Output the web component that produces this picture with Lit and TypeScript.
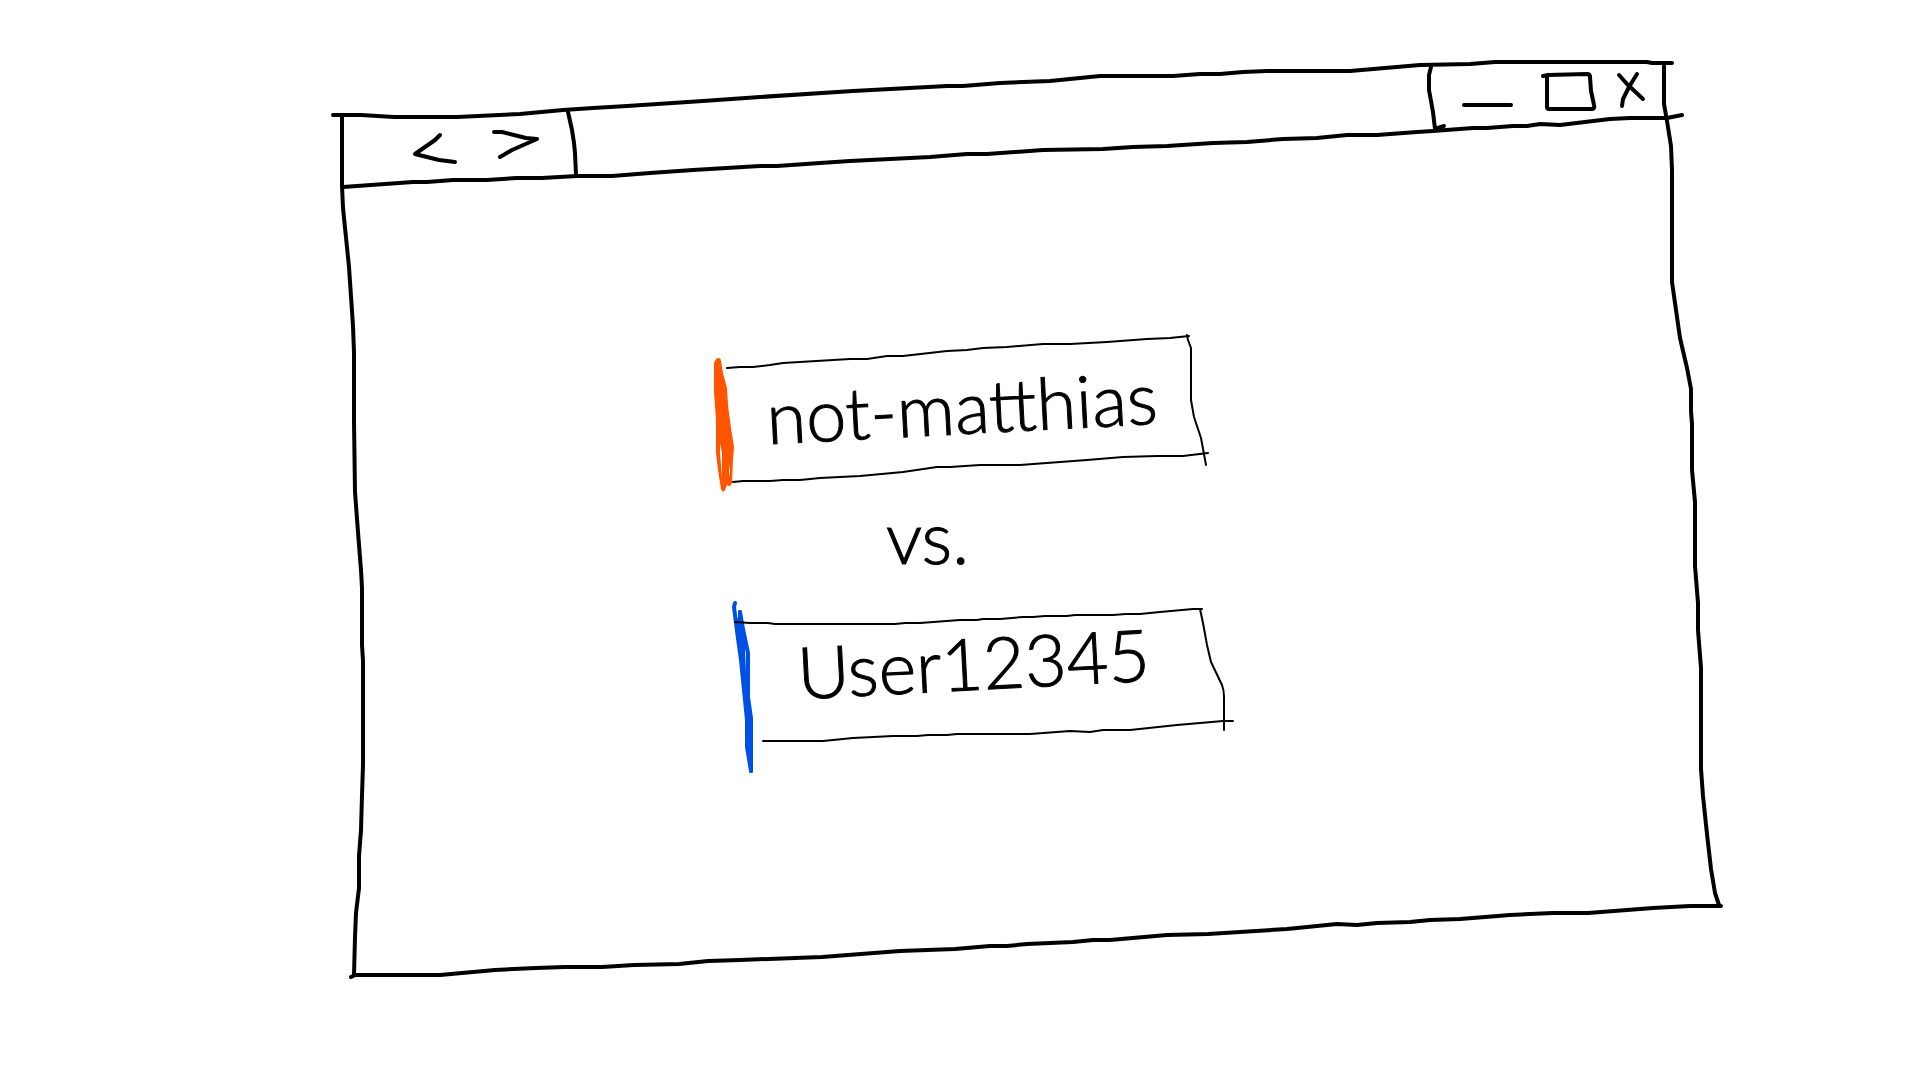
import { LitElement, html, css, svg } from "lit";
import { customElement, property } from "lit/decorators.js";

/** Hand-drawn outline of the browser window with its title bar. */
const windowFrame = html`
  <svg class="sketch" viewBox="333 60 1391 920" preserveAspectRatio="none" aria-hidden="true">
    <g class="thick">
      <path d="M333 115H361L394 117H457L520 114L563 110L593 108L627 106L703 101L760 97L853 91L947 86H963L1000 83L1050 81L1100 76H1173L1200 74H1220L1243 72L1267 71H1350L1420 65L1470 64L1495 62H1647L1652 63H1672" />
      <path d="M343 187L357 186L413 182H427L453 180L487 180L517 178H542L577 176H612L650 173L693 170L760 166H777L820 163L850 161L870 160L930 157L967 154H987L1043 150L1103 149L1133 147L1167 146L1213 143L1247 142L1283 139L1317 138L1347 135L1377 135L1417 132L1433 131L1473 128H1487L1513 126H1527L1540 124L1560 125L1610 119L1630 118H1667L1682 115" />
      <path d="M342 115V186L343 208L349 267L353 326L354 353V422L355 492L358 532L361 570L362 588V645L363 661V765L362 795L361 830L359 856V888L356 913L355 937L354 975" />
      <path d="M351 977L355 975H440L495 970L536 968L565 967H602L634 965L679 964L708 961L740 960L822 957L900 951L955 949L990 946H1007L1027 944L1073 942L1093 940H1110L1167 935L1208 934L1287 929L1337 924L1357 925L1377 923L1410 922L1430 920L1460 919L1510 915L1553 913H1588L1653 908L1690 906H1721" />
      <path d="M1664 66V104L1667 121L1671 146L1672 170V282L1675 303L1680 338L1687 368L1691 389V411L1692 424V470L1695 502V566L1698 603V630L1701 668V769L1703 796L1707 834L1711 869L1715 893L1719 905" />
      <path d="M568 112L572 130L574 143L575 153L576 175" />
      <path d="M1431 67L1429 75V90L1433 112L1435 129L1444 126" />
    </g>
  </svg>
`;

const orangeCard = svg`
  <svg class="sketch" viewBox="714 334 496 158" preserveAspectRatio="none" aria-hidden="true">
    <path class="orange" fill-rule="evenodd" d="M715 361Q716 358 718 358Q721 358 721 361L723 373L727 388L728 405L731 428L734 447L733 460L732 483Q730 488 727 485L725 490Q723 494 721 489L718 470L716 453V420L714 392V363ZM720 443L722 453V477L720 453ZM729 464L730 472L729 477Z" />
    <path class="thin" d="M727 368L740 367H753L770 365L783 363L850 359H867L887 356H903L947 351L967 350L983 348L1007 347L1043 344H1070L1107 342L1147 339L1170 338L1189 336" />
    <path class="thin" d="M1187 335L1188 340L1191 348V400L1194 417L1201 438L1206 465" />
    <path class="thin" d="M1208 453L1183 456H1157L1123 457L1087 460L1020 465H980L950 467H937L903 472L860 476L820 478L800 480H783L770 481H743L733 482" />
  </svg>
`;

const blueCard = svg`
  <svg class="sketch" viewBox="732 602 502 172" preserveAspectRatio="none" aria-hidden="true">
    <g class="blue">
      <path d="M735 603L734 607L737 631L741 660L745 700L747 720V747L751 771" />
      <path d="M740 612L743 629L748 653V697L751 718V771" />
      <path d="M740 612V630L743 660L745 690L748 720L750 760" />
      <path d="M738 620L743 645L744 680L748 710V745" />
    </g>
    <path class="thin" d="M735 622L750 623H768L775 624H895L905 623H920L960 620H977L983 619H1000L1023 617H1033L1045 616H1067L1075 615H1113L1126 614H1140L1160 612L1193 609H1202" />
    <path class="thin" d="M1200 609L1203 623L1207 645L1211 662L1222 685Q1224 690 1224 697V730" />
    <path class="thin" d="M1233 721H1223L1177 725L1130 730H1103L1090 732L1070 731L1030 734H957L947 735H928L917 736H893L853 738L823 741H763" />
  </svg>
`;

@customElement("player-card")
export class PlayerCard extends LitElement {
  @property() name = "";
  @property({ reflect: true }) side: "orange" | "blue" = "orange";

  static styles = css`
    :host {
      display: grid;
      justify-items: center;
      align-items: start;
      position: relative;
      box-sizing: border-box;
    }
    :host([side="orange"]) {
      width: 496px;
      min-height: 158px;
      padding-top: 28px;
    }
    :host([side="blue"]) {
      width: 502px;
      min-height: 172px;
      padding: 16px 20px 0 0;
    }
    .sketch {
      position: absolute;
      inset: 0;
      width: 100%;
      height: 100%;
      overflow: visible;
    }
    .thin {
      fill: none;
      stroke: #000;
      stroke-width: 2;
      stroke-linecap: round;
      stroke-linejoin: round;
    }
    .orange {
      fill: #ff5500;
    }
    .blue {
      fill: none;
      stroke: #0050e6;
      stroke-width: 4;
      stroke-linecap: round;
      stroke-linejoin: round;
    }
    .name {
      margin: 0;
      font-size: 72px;
      line-height: 88px;
      font-weight: 300;
      -webkit-text-stroke: 1px #000;
      white-space: nowrap;
      transform: rotate(-3deg);
    }
  `;

  render() {
    return html`
      ${this.side === "orange" ? orangeCard : blueCard}
      <h2 class="name">${this.name}</h2>
    `;
  }
}

@customElement("app-root")
export class AppRoot extends LitElement {
  static styles = css`
    :host {
      display: flex;
      box-sizing: border-box;
      min-height: 100vh;
      padding: 60px 196px 100px 333px;
      background: #fff;
      color: #000;
      font-family: Lato, "Open Sans", sans-serif;
    }
    .window {
      position: relative;
      flex: 1;
      display: flex;
      flex-direction: column;
    }
    .sketch {
      position: absolute;
      inset: 0;
      width: 100%;
      height: 100%;
      overflow: visible;
      pointer-events: none;
    }
    .thick,
    .icon {
      fill: none;
      stroke: #000;
      stroke-width: 4;
      stroke-linecap: round;
      stroke-linejoin: round;
    }
    .titlebar {
      display: flex;
      justify-content: space-between;
      padding: 12px 80px 20px;
    }
    .history,
    .controls {
      display: flex;
    }
    .history {
      gap: 32px;
      align-self: flex-end;
    }
    .controls {
      gap: 24px;
      padding-bottom: 54px;
    }
    .button {
      display: block;
      padding: 0;
      border: 0;
      background: none;
      cursor: pointer;
    }
    .icon {
      display: block;
      overflow: visible;
    }
    .match {
      display: flex;
      flex-direction: column;
      align-items: flex-start;
      padding: 148px 0 0 381px;
    }
    .versus {
      margin: 0;
      padding: 0 0 22px 172px;
      font-size: 72px;
      line-height: 88px;
      font-weight: 300;
      -webkit-text-stroke: 1px #000;
    }
    .second {
      margin-left: 18px;
    }
  `;

  render() {
    return html`
      <div class="window">
        ${windowFrame}
        <header class="titlebar">
          <nav class="history" aria-label="History">
            <button class="button" aria-label="Back">
              <svg class="icon" width="48" height="36" viewBox="413 132 48 36">
                <path d="M440 137L435 142L415 156L439 162L455 164" />
              </svg>
            </button>
            <button class="button" aria-label="Forward">
              <svg class="icon" width="48" height="36" viewBox="493 132 48 36">
                <path d="M494 134H502L514 137L526 140L537 141L512 152L500 159" />
              </svg>
            </button>
          </nav>
          <div class="controls">
            <button class="button" aria-label="Minimize">
              <svg class="icon" width="56" height="40" viewBox="1460 72 56 40">
                <path d="M1464 105H1511" />
              </svg>
            </button>
            <button class="button" aria-label="Maximize">
              <svg class="icon" width="56" height="40" viewBox="1540 72 56 40">
                <path d="M1543 76L1548 75L1587 74Q1590 74 1590 77L1591 91L1594 105Q1595 109 1592 109H1549Q1547 109 1547 107V77" />
              </svg>
            </button>
            <button class="button" aria-label="Close">
              <svg class="icon" width="24" height="40" viewBox="1620 72 24 40">
                <path d="M1619 75L1627 84L1643 99M1637 74L1629 87L1623 99L1622 106" />
              </svg>
            </button>
          </div>
        </header>
        <main class="match">
          <player-card side="orange" name="not-matthias"></player-card>
          <p class="versus">vs.</p>
          <player-card class="second" side="blue" name="User12345"></player-card>
        </main>
      </div>
    `;
  }
}
